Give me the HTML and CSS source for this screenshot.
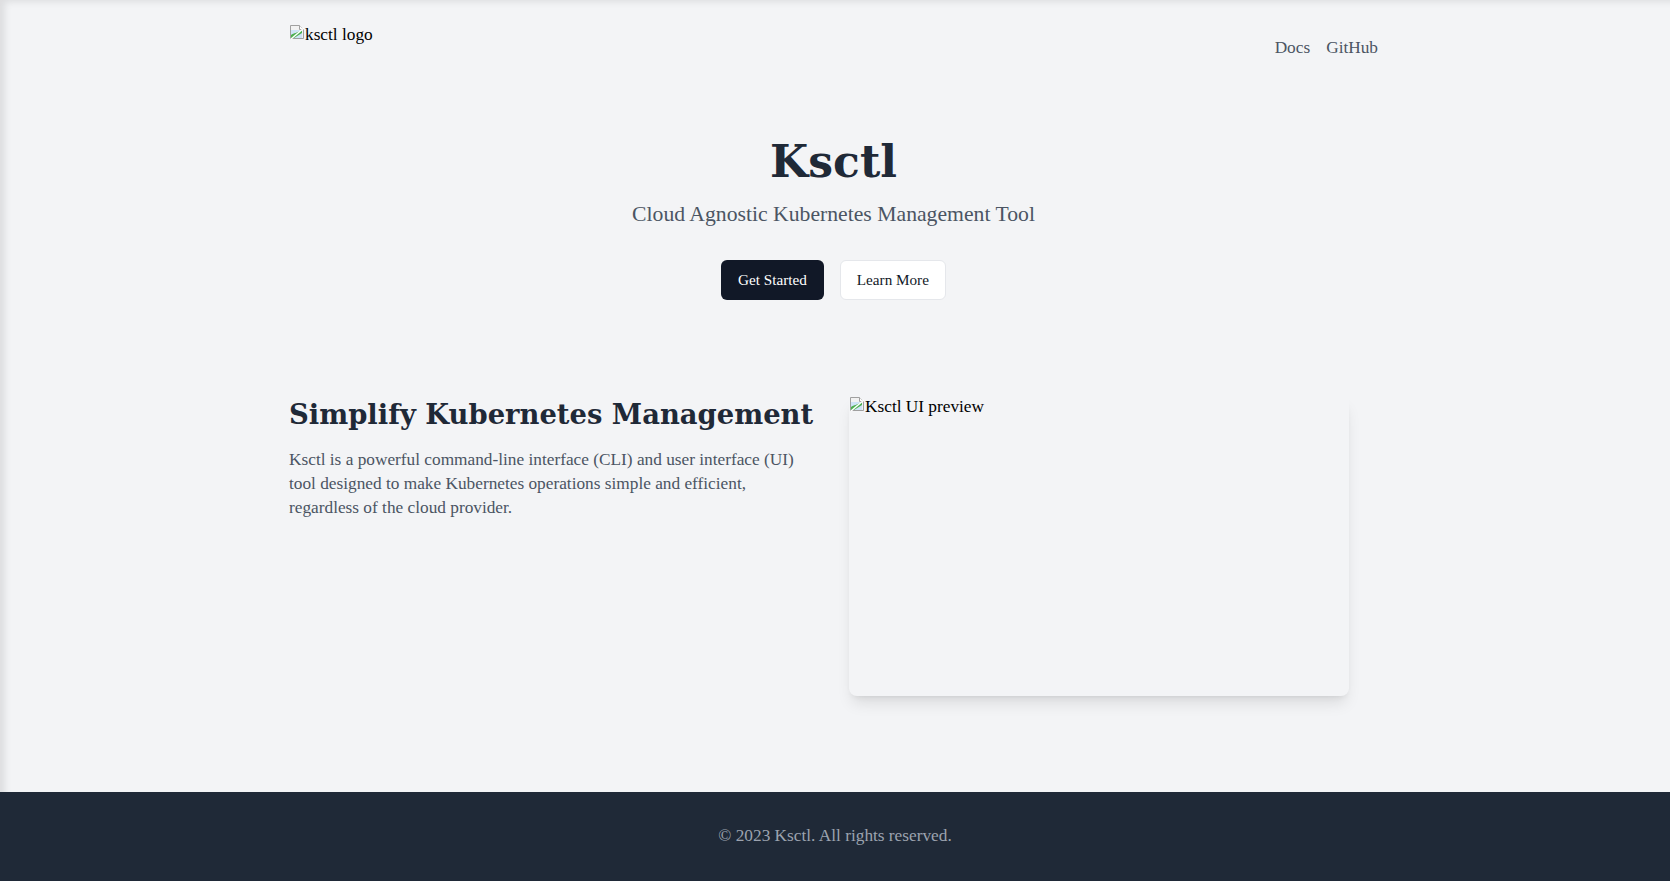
FILE: index.html
```html
<!DOCTYPE html>
<html lang="en">
<head>
<meta charset="utf-8">
<title>Ksctl</title>
<link rel="stylesheet" href="styles.css">
</head>
<body>
<div class="page">
  <header class="container header">
    <div class="logo">
      <span class="broken"><svg viewBox="0 0 16 16" width="16" height="16"><path d="M1.5 1.5h9l4 4v9h-13z" fill="#f2f2f2" stroke="#a0a0a0"/><path d="M10.5 1.5v4h4" fill="#fff" stroke="#a0a0a0"/><path d="M2 6h11v8H2z" fill="#cfe3f7"/><path d="M2 14 L2 11 C5 9 8 9 13 6 L13 9 L5 14z" fill="#4caf50"/><path d="M2 15 L15 4" stroke="#fff" stroke-width="1.5"/></svg></span><span class="alt">ksctl logo</span>
    </div>
    <nav class="nav">
      <a href="#">Docs</a>
      <a href="#">GitHub</a>
    </nav>
  </header>

  <section class="container hero">
    <h1 class="title">Ksctl</h1>
    <p class="subtitle">Cloud Agnostic Kubernetes Management Tool</p>
    <div class="actions">
      <a class="btn btn-dark" href="#">Get Started</a>
      <a class="btn btn-light" href="#">Learn More</a>
    </div>
  </section>

  <section class="container feature">
    <div class="feature-text">
      <h2 class="feature-title">Simplify Kubernetes Management</h2>
      <p class="feature-desc">Ksctl is a powerful command-line interface (CLI) and user interface (UI) tool designed to make Kubernetes operations simple and efficient, regardless of the cloud provider.</p>
    </div>
    <div class="preview">
      <span class="broken"><svg viewBox="0 0 16 16" width="16" height="16"><path d="M1.5 1.5h9l4 4v9h-13z" fill="#f2f2f2" stroke="#a0a0a0"/><path d="M10.5 1.5v4h4" fill="#fff" stroke="#a0a0a0"/><path d="M2 6h11v8H2z" fill="#cfe3f7"/><path d="M2 14 L2 11 C5 9 8 9 13 6 L13 9 L5 14z" fill="#4caf50"/><path d="M2 15 L15 4" stroke="#fff" stroke-width="1.5"/></svg></span><span class="alt">Ksctl UI preview</span>
    </div>
  </section>
</div>
<footer class="footer">
  <p>© 2023 Ksctl. All rights reserved.</p>
</footer>
</body>
</html>
```

FILE: styles.css
```css
* { box-sizing: border-box; }
html, body { margin: 0; padding: 0; }
body {
  font-family: "Liberation Serif", "Times New Roman", serif;
  background: #f3f4f6;
  color: #000;
  font-size: 17.3px;
  line-height: 1.5;
}
.page {
  height: 792px;
  padding-right: 3px;
  box-shadow: inset 8px 5px 7px -3px rgba(0,0,0,0.09);
}
.container {
  width: 1089px;
  margin: 0 auto;
}
.header {
  display: flex;
  justify-content: space-between;
  align-items: center;
  padding-top: 24px;
}
.logo {
  height: 48px;
  display: flex;
  align-items: flex-start;
  line-height: 22px;
}
.broken { display: inline-flex; width: 16px; height: 16px; flex: none; }
.broken svg { display: block; }
.alt { color: #000; }
.nav { display: flex; gap: 16px; line-height: 24px; }
.nav a { color: #4b5563; text-decoration: none; }
.hero {
  text-align: center;
  padding-top: 66px;
}
.title {
  margin: 0;
  font-family: "DejaVu Serif", serif;
  font-size: 44px;
  line-height: 48px;
  font-weight: 700;
  color: #1f2937;
}
.subtitle {
  margin: 14px 0 0;
  font-size: 21.7px;
  line-height: 28px;
  color: #4b5563;
}
.actions {
  margin-top: 32px;
  display: flex;
  justify-content: center;
  gap: 16px;
}
.btn {
  display: inline-block;
  height: 40px;
  padding: 0 16px;
  line-height: 38px;
  font-size: 15.2px;
  border-radius: 6px;
  text-decoration: none;
  border: 1px solid transparent;
}
.btn-dark { background: #111827; color: #fff; }
.btn-light { background: #fff; color: #111827; border-color: #e5e7eb; }
.feature {
  margin-top: 96px;
  display: grid;
  grid-template-columns: 528px 528px;
  column-gap: 32px;
}
.feature-title {
  margin: 0;
  font-family: "DejaVu Serif", serif;
  font-size: 27.4px;
  line-height: 36px;
  font-weight: 700;
  color: #1f2937;
  white-space: nowrap;
}
.feature-desc {
  margin: 16px 0 0;
  color: #4b5563;
  line-height: 24px;
}
.preview {
  width: 500px;
  height: 300px;
  border-radius: 8px;
  box-shadow: 0 10px 15px -3px rgba(0,0,0,0.1), 0 4px 6px -4px rgba(0,0,0,0.1);
  display: flex;
  align-items: flex-start;
  line-height: 21px;
}
.footer {
  background: #1f2937;
  padding: 32px 0 33px;
  text-align: center;
}
.footer p {
  margin: 0;
  color: #9ca3af;
  line-height: 24px;
}
```
